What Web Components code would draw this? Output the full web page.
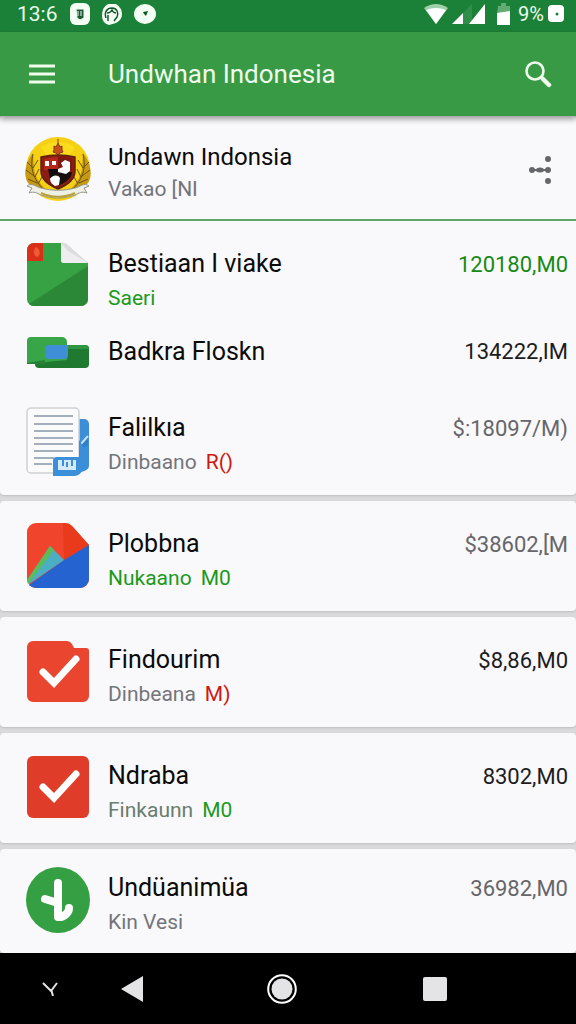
<!DOCTYPE html>
<html lang="id">
<head>
<meta charset="utf-8">
<meta name="viewport" content="width=device-width, initial-scale=1">
<title>Undwhan Indonesia</title>
<style>
    html, body {
        margin: 0;
        padding: 0;
    }
    body {
        min-height: 100vh;
        display: flex;
        flex-direction: column;
        background: #d9d9dc;
        font-family: Roboto, "Noto Sans", sans-serif;
        color: #0b0b0b;
    }
    main {
        flex: 1;
        display: flex;
        flex-direction: column;
        gap: 6px;
    }
    card-group:last-of-type {
        flex: 1;
        --row-top: 18px;
        --row-bottom: 12px;
    }
    svg {
        display: block;
    }
</style>
</head>
<body>
<status-bar></status-bar>
<app-bar>Undwhan Indonesia</app-bar>
<main>
    <card-group>
        <profile-row>
            <svg slot="icon" width="68" height="66" viewBox="0 0 68 66">
                <circle cx="34" cy="33" r="32" fill="#f6d012"/>
                <path d="M17 11a32 32 0 0 1 34 0l-5 8H22z" fill="#fbdc1c"/>
                <path d="M9 17C1 27-1 39 4 47c6 6 13 8 21 9-9-7-14-15-15-24z" fill="#c89a13"/>
                <path d="M59 17c8 10 10 22 5 30-6 6-13 8-21 9 9-7 14-15 15-24z" fill="#c89a13"/>
                <path d="M9 18c-3 12-1 23 9 34M3 26l6 6M2 34l8 6M4 43l9 4M14 24l-5 8M15 33l-4 8M18 41l-4 7M59 18c3 12 1 23-9 34M65 26l-6 6M66 34l-8 6M64 43l-9 4M54 24l5 8M53 33l4 8M50 41l4 7" fill="none" stroke="#6b5212" stroke-width="1"/>
                <path d="M34 3v4M30 10l2 1 2-4 2 4 2-1 0 4 1 2-3 1-2 2-2-2-3-1 1-2z" fill="#c4501a" stroke="#8c3812"/>
                <path d="M17 21q17-4 34 0v14c0 8-6 13-17 18-11-5-17-10-17-18z" fill="#8b1c12" stroke="#5c2410" stroke-width="1.5"/>
                <path d="M20 23q7-2 14-2v13H20z" fill="#b3261a"/>
                <path d="M34 21q8 0 14 2v11H34z" fill="#7c1a12"/>
                <path d="M34 36h14c0 6-6 10-14 14z" fill="#17110f"/>
                <path d="M24 33h10v9h-8z" fill="#120d0c"/>
                <path d="M21 25h4v5h-4zM28 25h4v4h-4zM37 27l4-3 5 2v9l-4 3-8-2v-3l5-2zM26 43c2-4 8-5 10-1l-1 7-4 1c-3-2-5-4-5-7z" fill="#fff"/>
                <path d="M3 50c5-4 9 1 14 2 11 3 23 3 34 0 5-1 9-6 14-2l-5 2 3 5c-5-2-8 0-12 2-11 4-23 4-34 0-4-2-7-4-12-2l3-5z" fill="#eef0e6" stroke="#94958a"/>
                <path d="M17 57c11 5 23 5 34 0" fill="none" stroke="#b7a23b" stroke-width="2"/>
            </svg>
            <span slot="title">Undawn Indonsia</span>
            <span slot="sub">Vakao [NI</span>
        </profile-row>
        <account-row amount="120180,M0" tone="green">
            <svg slot="icon" width="64" height="66" viewBox="0 0 64 66">
                <path d="M8 0h28l26 20v36a7 7 0 0 1-7 7H8a7 7 0 0 1-7-7V7a7 7 0 0 1 7-7z" fill="#36a243"/>
                <path d="M62 23v33a7 7 0 0 1-7 7H8q-3 0-5-2z" fill="#2a8836"/>
                <path d="M8 0h9v18H1V7a7 7 0 0 1 7-7z" fill="#d93018"/>
                <path d="M10 4c4 2 5 7 2 10-4 0-6-6-2-10z" fill="#f05a35"/>
                <path d="M35 0h3q2 0 4 2l20 18H38q-3 0-3-3z" fill="#dcdcdf"/>
                <path d="M35 0l7 8 20 12H38q-3 0-3-3z" fill="#eeeef0"/>
            </svg>
            <span slot="title">Bestiaan I viake</span>
            <span slot="sub" class="green">Saeri</span>
        </account-row>
        <account-row amount="134222,IM" compact>
            <svg slot="icon" width="64" height="34" viewBox="0 0 64 34">
                <path d="M10 10h49a4 4 0 0 1 4 4v15a4 4 0 0 1-4 4H13a4 4 0 0 1-4-4z" fill="#1f7a30"/>
                <path d="M42 10h17a4 4 0 0 1 4 4H42z" fill="#2f9540"/>
                <path d="M5 2h31a5 5 0 0 1 5 5v18L1 29V6a4 4 0 0 1 4-4z" fill="#38a548"/>
                <path d="M1 28l18-3v4H1z" fill="#258236"/>
                <path d="M22 10h20v10a4 4 0 0 1-4 4H22a3 3 0 0 1-3-3v-8a3 3 0 0 1 3-3z" fill="#3f8ed8"/>
            </svg>
            <span slot="title">Badkra Floskn</span>
        </account-row>
        <account-row amount="$:18097/M)" tone="gray">
            <svg slot="icon" width="64" height="70" viewBox="0 0 64 70">
                <path d="M50 12h8a5 5 0 0 1 5 5v42q0 4-8 6H44z" fill="#3b8ed8"/>
                <path d="M53 38l9-10v10l-7 4z" fill="#2f7fca"/>
                <path d="M54 38l8-9" stroke="#c7e2fa" stroke-width="2"/>
                <rect x="1" y="1" width="52" height="65" rx="4" fill="#fbfbfc" stroke="#cfd1d4" stroke-width="1.5"/>
                <path d="M8 9h39M8 17h39M8 24h39M8 31h39M8 37h39M8 44h39M8 51h20M8 57h18" stroke="#a4afbd" stroke-width="2"/>
                <path d="M31 50h22V33l4 6v22q-2 8-9 8H27V54a4 4 0 0 1 4-4z" fill="#3b8ed8"/>
                <path d="M32 53h18v10H32z" fill="#d4e9fa"/>
                <path d="M37 53v6M41 55v5M46 53v6" stroke="#3b8ed8" stroke-width="2"/>
            </svg>
            <span slot="title">Falilkıa</span>
            <span slot="sub">Dinbaano</span>
            <span slot="tag" class="red">R()</span>
        </account-row>
    </card-group>
    <card-group>
        <account-row amount="$38602,[M" tone="gray">
            <svg slot="icon" width="64" height="66" viewBox="0 0 64 66">
                <path d="M10 0h29q4 0 7 3l17 19v34a9 9 0 0 1-9 9H10a9 9 0 0 1-9-9V9a9 9 0 0 1 9-9z" fill="#f0452c"/>
                <path d="M37 0h2q4 0 7 3l17 19-25 15z" fill="#e93a1b"/>
                <path d="M63 22v34a9 9 0 0 1-9 9H10q-4 0-7-3l35-25z" fill="#2563d0"/>
                <path d="M1 57l23-34 14 14L3 61z" fill="#4aafc4"/>
                <path d="M1 57l23-34 4 4L2 61z" fill="#5fba58"/>
            </svg>
            <span slot="title">Plobbna</span>
            <span slot="sub" class="green">Nukaano</span>
            <span slot="tag" class="green">M0</span>
        </account-row>
    </card-group>
    <card-group>
        <account-row amount="$8,86,M0">
            <svg slot="icon" width="64" height="66" viewBox="0 0 64 66">
                <path d="M7 2h34q3 0 5 3l2 4h12a3 3 0 0 1 3 3v45a6 6 0 0 1-6 6H7a6 6 0 0 1-6-6V8a6 6 0 0 1 6-6z" fill="#ea452f"/>
                <path d="M17 33l11 11 22-24" fill="none" stroke="#fff" stroke-width="7" stroke-linecap="round"/>
            </svg>
            <span slot="title">Findourim</span>
            <span slot="sub">Dinbeana</span>
            <span slot="tag" class="red">M)</span>
        </account-row>
    </card-group>
    <card-group>
        <account-row amount="8302,M0">
            <svg slot="icon" width="64" height="66" viewBox="0 0 64 66">
                <rect x="1" y="1" width="62" height="62" rx="6" fill="#df3d29"/>
                <path d="M17 32l11 11 22-24" fill="none" stroke="#fff" stroke-width="7" stroke-linecap="round"/>
            </svg>
            <span slot="title">Ndraba</span>
            <span slot="sub" class="fade">Finkaunn</span>
            <span slot="tag" class="green">M0</span>
        </account-row>
    </card-group>
    <card-group>
        <account-row amount="36982,M0" tone="gray">
            <svg slot="icon" width="64" height="68" viewBox="0 0 64 68">
                <ellipse cx="32" cy="33" rx="32" ry="33" fill="#35a043"/>
                <path d="M32 16v34M32 36l-13-4M33 50c5 0 10-4 10-9" fill="none" stroke="#fff" stroke-width="8" stroke-linecap="round"/>
            </svg>
            <span slot="title">Undüanimüa</span>
            <span slot="sub">Kin Vesi</span>
        </account-row>
    </card-group>
</main>
<system-nav></system-nav>

<script>
    class StatusBar extends HTMLElement {
        connectedCallback() {
            this.attachShadow({ mode: 'open' });
            this.shadowRoot.innerHTML = `
                <style>
                    :host {
                        display: flex;
                        align-items: center;
                        justify-content: space-between;
                        height: 32px;
                        padding: 0 12px 4px 17px;
                        box-sizing: border-box;
                        background: #1c8138;
                        color: #e9fbea;
                        font-size: 21px;
                        line-height: 28px;
                    }
                    .side {
                        display: flex;
                        align-items: center;
                    }
                    .left {
                        gap: 12px;
                    }
                    .right {
                        gap: 4px;
                        font-size: 20px;
                    }
                    svg {
                        display: block;
                    }
                </style>
                <div class="side left">
                    <span>13:6</span>
                    <svg width="20" height="22" viewBox="0 0 20 22">
                        <rect width="20" height="22" rx="6" fill="#f4fff4"/>
                        <path d="M6 6h8v9l-4 2-3-2zM8 8v5M11 8v5" fill="#1c5a35" stroke="#f4fff4"/>
                    </svg>
                    <svg width="20" height="22" viewBox="0 0 20 22">
                        <path d="M6 1h8q6 4 6 10t-6 9l-7 2q-7-2-7-9 0-9 6-12z" fill="#f4fff4"/>
                        <path d="M4 15c-2-6 1-10 6-10s7 5 5 9l-3 4M5 10c2 0 4-1 5-3 1 2 3 3 4 3M6 12v6" fill="none" stroke="#14562c" stroke-width="1.5"/>
                    </svg>
                    <svg width="22" height="20" viewBox="0 0 22 20">
                        <ellipse cx="11" cy="10" rx="11" ry="10" fill="#f4fff4"/>
                        <path d="M9 8l5-1-2 5-2-2z" fill="#14562c"/>
                    </svg>
                </div>
                <div class="side right">
                    <svg width="24" height="20" viewBox="0 0 24 20">
                        <path d="M0 4q12-8 24 0L12 20z" fill="#9fd0a9"/>
                        <path d="M2 6q10-4 20 0L12 20z" fill="#fff"/>
                    </svg>
                    <svg width="34" height="20" viewBox="0 0 34 20">
                        <path d="M0 20h20V0z" fill="#2f8f4a"/>
                        <path d="M0 20h11V9zM17 20h16V0z" fill="#fff"/>
                    </svg>
                    <svg width="24" height="22" viewBox="0 0 24 22">
                        <path d="M8 3h3V0h5v3h4v8H7z" fill="#62ab72"/>
                        <path d="M7 10l13-2v14H7z" fill="#fff"/>
                    </svg>
                    <span>9%</span>
                    <svg width="16" height="18" viewBox="0 0 16 18">
                        <rect width="16" height="17" rx="4" fill="#fff"/>
                        <circle cx="9" cy="9" r="1.5" fill="#1c8138"/>
                    </svg>
                </div>
            `;
        }
    }

    class AppBar extends HTMLElement {
        connectedCallback() {
            this.attachShadow({ mode: 'open' });
            this.shadowRoot.innerHTML = `
                <style>
                    :host {
                        display: block;
                        position: relative;
                        z-index: 1;
                        background: #389a45;
                        box-shadow: 0 3px 6px rgba(0,0,0,0.4);
                        color: #effcec;
                    }
                    header {
                        display: flex;
                        align-items: center;
                        height: 84px;
                        padding: 0 18px 0 22px;
                    }
                    h1 {
                        flex: 1;
                        margin: 0 0 0 46px;
                        font-size: 26px;
                        line-height: 32px;
                        font-weight: 400;
                    }
                    button {
                        width: 40px;
                        height: 40px;
                        padding: 0;
                        border: 0;
                        background: none;
                        color: inherit;
                        display: grid;
                        place-items: center;
                    }
                </style>
                <header>
                    <button aria-label="Menu">
                        <svg width="26" height="20" viewBox="0 0 26 20">
                            <path d="M0 2h26M0 10h26M0 18h26" stroke="currentColor" stroke-width="3"/>
                        </svg>
                    </button>
                    <h1><slot></slot></h1>
                    <button aria-label="Cari">
                        <svg width="28" height="28" viewBox="0 0 28 28" fill="none" stroke="currentColor">
                            <circle cx="11" cy="11" r="8.5" stroke-width="2.6"/>
                            <path d="M17 17l2 2" stroke-width="3"/>
                            <path d="M19 19l6 6" stroke-width="4.5" stroke-linecap="round"/>
                        </svg>
                    </button>
                </header>
            `;
        }
    }

    class CardGroup extends HTMLElement {
        connectedCallback() {
            this.attachShadow({ mode: 'open' });
            this.shadowRoot.innerHTML = `
                <style>
                    :host {
                        display: block;
                        background: #f9f8fb;
                        border-radius: 4px;
                        box-shadow: 0 1px 2px rgba(0,0,0,0.12);
                    }
                </style>
                <slot></slot>
            `;
        }
    }

    // shared by the profile header and every account row
    const rowStyles = `
        :host {
            display: grid;
            grid-template-columns: 64px minmax(0, 1fr) auto;
            column-gap: 18px;
            align-items: start;
            padding: var(--row-top, 22px) 8px var(--row-bottom, 16px) 26px;
        }
        .icon {
            height: 64px;
        }
        .text {
            padding-top: 4px;
        }
        .title {
            font-size: 25px;
            line-height: 34px;
        }
        .sub {
            display: flex;
            gap: 9px;
            font-size: 21px;
            line-height: 34px;
            color: #74757a;
        }
        ::slotted(.green) {
            color: #1b9a1b;
        }
        ::slotted(.red) {
            color: #cc1a12;
        }
        ::slotted(.fade) {
            color: #6a7c6c;
        }
    `;

    class ProfileRow extends HTMLElement {
        connectedCallback() {
            this.attachShadow({ mode: 'open' });
            this.shadowRoot.innerHTML = `
                <style>
                    ${rowStyles}
                    :host {
                        grid-template-columns: 68px minmax(0, 1fr) auto;
                        column-gap: 16px;
                        padding: 20px 16px 15px 24px;
                        border-bottom: 2px solid #5fa568;
                    }
                    .title {
                        font-size: 24px;
                    }
                    .sub {
                        line-height: 30px;
                    }
                    button {
                        align-self: center;
                        width: 40px;
                        height: 40px;
                        padding: 0;
                        border: 0;
                        background: none;
                        color: #66676a;
                        display: grid;
                        place-items: center;
                    }
                </style>
                <div class="icon"><slot name="icon"></slot></div>
                <div class="text">
                    <div class="title"><slot name="title"></slot></div>
                    <div class="sub"><slot name="sub"></slot></div>
                </div>
                <button aria-label="Bagikan">
                    <svg width="24" height="28" viewBox="0 0 24 28" fill="currentColor">
                        <circle cx="20" cy="3" r="3"/>
                        <circle cx="20" cy="14" r="3"/>
                        <circle cx="20" cy="25" r="3"/>
                        <circle cx="4" cy="14" r="3"/>
                        <ellipse cx="12" cy="14" rx="4" ry="2.5"/>
                        <path d="M4 13h16v2H4z"/>
                    </svg>
                </button>
            `;
        }
    }

    class AccountRow extends HTMLElement {
        connectedCallback() {
            this.attachShadow({ mode: 'open' });
            this.shadowRoot.innerHTML = `
                <style>
                    ${rowStyles}
                    :host([compact]) {
                        padding-top: 4px;
                    }
                    :host([compact]) .icon {
                        height: 34px;
                    }
                    :host([compact]) .text,
                    :host([compact]) .amount {
                        padding-top: 0;
                    }
                    :host([compact]) .sub {
                        display: none;
                    }
                    .amount {
                        padding-top: 4px;
                        font-size: 22px;
                        line-height: 36px;
                        color: #1c1c1e;
                    }
                    :host([compact]) .amount {
                        line-height: 34px;
                    }
                    :host([tone="green"]) .amount {
                        color: #168a16;
                    }
                    :host([tone="gray"]) .amount {
                        color: #66666a;
                    }
                </style>
                <div class="icon"><slot name="icon"></slot></div>
                <div class="text">
                    <div class="title"><slot name="title"></slot></div>
                    <div class="sub"><slot name="sub"></slot><slot name="tag"></slot></div>
                </div>
                <div class="amount">${this.getAttribute('amount')}</div>
            `;
        }
    }

    class SystemNav extends HTMLElement {
        connectedCallback() {
            this.attachShadow({ mode: 'open' });
            this.shadowRoot.innerHTML = `
                <style>
                    :host {
                        display: block;
                        background: #000;
                        color: #e4e4e6;
                    }
                    nav {
                        display: grid;
                        grid-template-columns: 15fr 16fr 36fr 17fr 16fr;
                        align-items: center;
                        height: 71px;
                    }
                    button {
                        height: 48px;
                        padding: 0;
                        border: 0;
                        background: none;
                        color: inherit;
                        display: grid;
                        place-items: center;
                    }
                    .hide {
                        justify-content: end;
                        padding-right: 28px;
                    }
                </style>
                <nav>
                    <button class="hide" aria-label="Sembunyikan">
                        <svg width="16" height="14" viewBox="0 0 16 14" fill="none" stroke="currentColor" stroke-width="2">
                            <path d="M1 1l8 8 6-8M9 7l2 7"/>
                        </svg>
                    </button>
                    <button aria-label="Kembali">
                        <svg width="22" height="26" viewBox="0 0 22 26">
                            <path d="M22 0v26L0 13z" fill="currentColor"/>
                        </svg>
                    </button>
                    <button aria-label="Beranda">
                        <svg width="30" height="30" viewBox="0 0 30 30">
                            <circle cx="15" cy="15" r="13.8" fill="none" stroke="#fff" stroke-width="2"/>
                            <circle cx="15" cy="15" r="10.5" fill="currentColor"/>
                        </svg>
                    </button>
                    <button aria-label="Terbaru">
                        <svg width="24" height="24" viewBox="0 0 24 24">
                            <rect width="24" height="24" rx="2" fill="currentColor"/>
                        </svg>
                    </button>
                </nav>
            `;
        }
    }

    customElements.define('status-bar', StatusBar);
    customElements.define('app-bar', AppBar);
    customElements.define('card-group', CardGroup);
    customElements.define('profile-row', ProfileRow);
    customElements.define('account-row', AccountRow);
    customElements.define('system-nav', SystemNav);
</script>
</body>
</html>
